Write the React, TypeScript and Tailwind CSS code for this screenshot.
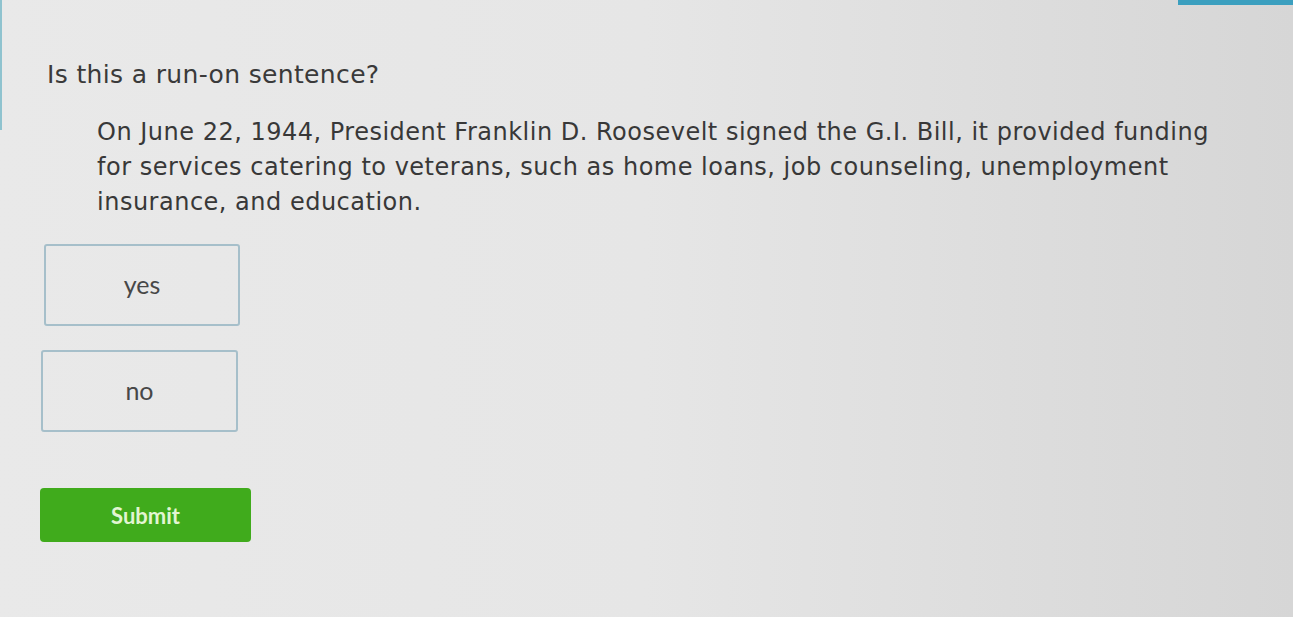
export default function App() {
  return (
    <div className="relative h-[617px] w-full overflow-hidden bg-gradient-to-r from-[#e9e9e9] via-[#e6e6e6] to-[#d6d6d6]">
      <div className="absolute right-0 top-0 h-[5px] w-[115px] bg-[#3b9fbf]" />
      <div className="absolute left-0 top-0 h-[130px] w-[2px] bg-[#8fc3cf]" />
      <div className="pl-[47px] pt-[58px]">
        <h1 className="font-['DejaVu_Sans',sans-serif] text-[25px] leading-[34px] tracking-[0.35px] text-[#3a3a3a]">
          Is this a run-on sentence?
        </h1>
        <p className="mt-[23px] ml-[50px] whitespace-nowrap font-['DejaVu_Sans',sans-serif] text-[24px] leading-[35px] tracking-[0.5px] text-[#383838]">
          On June 22, 1944, President Franklin D. Roosevelt signed the G.I. Bill, it provided funding
          <br />
          for services catering to veterans, such as home loans, job counseling, unemployment
          <br />
          insurance, and education.
        </p>
        <div className="mt-[24px] ml-[-3px] flex flex-col gap-[24px]">
          <button
            type="button"
            className="flex h-[82px] w-[196px] items-center justify-center rounded-[3px] border-2 border-[#a6bfca] font-['Lato',sans-serif] text-[25px] text-[#474747]"
          >
            yes
          </button>
          <button
            type="button"
            className="ml-[-3px] flex h-[82px] w-[197px] items-center justify-center rounded-[3px] border-2 border-[#a6bfca] font-['Lato',sans-serif] text-[25px] text-[#474747]"
          >
            no
          </button>
        </div>
        <button
          type="button"
          className="ml-[-7px] mt-[56px] flex h-[54px] w-[211px] items-center justify-center rounded-[4px] bg-[#40ab1c] font-['Lato',sans-serif] text-[22px] font-bold text-[#e2f5d2]"
        >
          Submit
        </button>
      </div>
    </div>
  );
}
